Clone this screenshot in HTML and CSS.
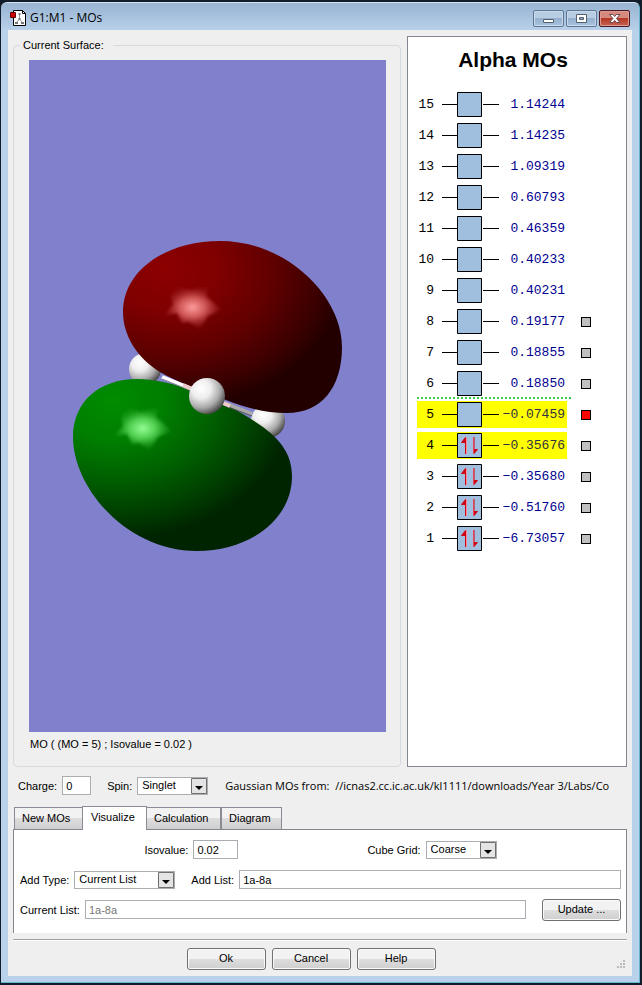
FILE: index.html
```html
<!DOCTYPE html>
<html lang="en">
<head>
<meta charset="utf-8">
<title>G1:M1 - MOs</title>
<link rel="stylesheet" href="styles.css">
</head>
<body>
<div class="window">
  <header class="titlebar">
    <svg class="app-icon" viewBox="0 0 16 16" aria-hidden="true">
      <path d="M3.500 .5H12.500L15.500 3.500V15.500H3.500Z" fill="#fff" stroke="#000"/>
      <path d="M12.500 .5V3.500H15.500" fill="none" stroke="#000"/>
      <path d="M9.500 5V9L6.500 12.500M9.500 9L12.500 12.500" fill="none" stroke="#999"/>
      <path d="M8.500 3h2v2h-2zM8.500 8h2v2h-2zM5 12h3v2H5zM11 12h3v2h-3z" fill="#777"/>
      <path d="M.5 2.500h5v5h-5z" fill="#c00" stroke="#600"/>
    </svg>
    <h1 class="caption">G1:M1 - MOs</h1>
    <div class="window-buttons">
      <button class="winbtn" type="button" aria-label="Minimize"><svg viewBox="0 0 29 15"><path d="M9.500 8.500h10v3h-10z" fill="#fff" stroke="#53616f"/></svg></button>
      <button class="winbtn" type="button" aria-label="Maximize"><svg viewBox="0 0 29 15"><path d="M9.500 3.500h10v8h-10z" fill="#fff" stroke="#53616f"/><path d="M12.500 6.500h4v2h-4z" fill="#8fa8c4" stroke="#53616f"/></svg></button>
      <button class="winbtn close" type="button" aria-label="Close"><svg viewBox="0 0 29 15"><path d="M9.500 3.500h3.500l1.700 2 1.700-2h3.500l-3.400 4 3.400 4h-3.500l-1.700-2-1.700 2h-3.500l3.400-4z" fill="#fff" stroke="#6b4a50"/></svg></button>
    </div>
  </header>

  <main class="client">
    <div class="upper">
      <fieldset class="surface">
        <legend>Current Surface:</legend>
        <svg class="scene" viewBox="0 0 357 672" role="img" aria-label="Molecular orbital surface">
          <defs>
            <radialGradient id="red" gradientUnits="userSpaceOnUse" cx="0" cy="0" r="1" gradientTransform="translate(135 208) rotate(4) scale(182 138)">
              <stop offset="0" stop-color="#8c0000"/><stop offset=".3" stop-color="#800000"/><stop offset=".6" stop-color="#600000"/><stop offset=".85" stop-color="#3c0000"/><stop offset="1" stop-color="#220000"/>
            </radialGradient>
            <radialGradient id="green" gradientUnits="userSpaceOnUse" cx="0" cy="0" r="1" gradientTransform="translate(82 340) rotate(4) scale(180 138)">
              <stop offset="0" stop-color="#008c00"/><stop offset=".3" stop-color="#007e00"/><stop offset=".6" stop-color="#005c00"/><stop offset=".85" stop-color="#003a00"/><stop offset="1" stop-color="#002400"/>
            </radialGradient>
            <radialGradient id="atom" cx=".34" cy=".3" r=".75">
              <stop offset="0" stop-color="#fff"/><stop offset=".35" stop-color="#eee"/><stop offset=".7" stop-color="#aaa"/><stop offset="1" stop-color="#444"/>
            </radialGradient>
            <radialGradient id="redShine"><stop offset="0" stop-color="#ffa0a0"/><stop offset=".45" stop-color="#df6666" stop-opacity=".85"/><stop offset="1" stop-color="#a02020" stop-opacity=".15"/></radialGradient>
            <radialGradient id="greenShine"><stop offset="0" stop-color="#98ff98"/><stop offset=".45" stop-color="#60df60" stop-opacity=".85"/><stop offset="1" stop-color="#20a020" stop-opacity=".15"/></radialGradient>
            <filter id="soft" x="-20%" y="-20%" width="140%" height="140%"><feGaussianBlur stdDeviation="1.500"/></filter>
          </defs>
          <rect width="357" height="672" fill="#8080cc"/>
          <circle cx="116" cy="309" r="16" fill="url(#atom)"/>
          <circle cx="239" cy="361" r="17" fill="url(#atom)"/>
          <path fill="url(#red)" d="M94 252C94 211 136 181 191 181C258 181 313 236 313 287C313 328 292 353 258 353C235 353 215 347 197 340C175 332 148 322 131 312C108 298 94 275 94 252Z"/>
          <path fill="url(#green)" d="M44 377C44 342 70 319 108 319C145 319 195 340 231 365C253 380 263 396 263 416C263 460 220 491 168 491C98 491 44 428 44 377Z"/>
          <path d="M133 317L163 329" stroke="#fff" stroke-width="4"/>
          <path d="M133 319L163 331" stroke="#89839b"/>
          <path d="M195 343L223 354" stroke="#aaa" stroke-width="4"/>
          <path d="M194 345L223 356" stroke="#555"/>
          <path d="M154 325L163 329M194 343L201 346" stroke="#eecaca" stroke-width="4"/>
          <circle cx="178" cy="336" r="18" fill="url(#atom)"/>
          <path fill="url(#redShine)" filter="url(#soft)" d="M149 226L161 230L180 226L177 236L193 250L179 256L171 269L160 262L153 263L148 253L134 256L144 245L142 235Z"/>
          <path fill="url(#greenShine)" filter="url(#soft)" d="M99 347L112 352L130 347L127 357L143 371L129 377L121 390L110 383L103 384L98 374L84 377L94 366L92 356Z"/>
        </svg>
        <p class="status">MO ( (MO = 5) ; Isovalue = 0.02 )</p>
      </fieldset>

      <section class="orbitals">
        <h2>Alpha MOs</h2>
        <svg class="symbols" aria-hidden="true">
          <symbol id="empty" viewBox="0 0 58 27"><path d="M0 13.500H15M41 13.500H57" stroke="#000"/><path d="M15.500 1.500h24v24h-24z" fill="#a0bfdf" stroke="#000"/></symbol>
          <symbol id="pair" viewBox="0 0 58 27"><use href="#empty"/><path d="M24.500 22V5M31.500 5V22" stroke="#ff8a98" stroke-width="1"/><path d="M23.500 22V5.500L19.500 10.500H23.500M32 5V21.500L35.500 17.500H32" stroke="#d00014" fill="#d00014"/></symbol>
        </svg>
        <table class="mo-list">
          <tbody>
            <tr><td>15</td><td><svg><use href="#empty"/></svg></td><td>1.14244</td><td></td></tr>
            <tr><td>14</td><td><svg><use href="#empty"/></svg></td><td>1.14235</td><td></td></tr>
            <tr><td>13</td><td><svg><use href="#empty"/></svg></td><td>1.09319</td><td></td></tr>
            <tr><td>12</td><td><svg><use href="#empty"/></svg></td><td>0.60793</td><td></td></tr>
            <tr><td>11</td><td><svg><use href="#empty"/></svg></td><td>0.46359</td><td></td></tr>
            <tr><td>10</td><td><svg><use href="#empty"/></svg></td><td>0.40233</td><td></td></tr>
            <tr><td>9</td><td><svg><use href="#empty"/></svg></td><td>0.40231</td><td></td></tr>
            <tr><td>8</td><td><svg><use href="#empty"/></svg></td><td>0.19177</td><td><input type="checkbox" aria-label="Show MO 8"></td></tr>
            <tr><td>7</td><td><svg><use href="#empty"/></svg></td><td>0.18855</td><td><input type="checkbox" aria-label="Show MO 7"></td></tr>
            <tr><td>6</td><td><svg><use href="#empty"/></svg></td><td>0.18850</td><td><input type="checkbox" aria-label="Show MO 6"></td></tr>
            <tr class="selected divider"><td>5</td><td><svg><use href="#empty"/></svg></td><td>−0.07459</td><td><input type="checkbox" aria-label="Show MO 5" checked></td></tr>
            <tr class="selected"><td>4</td><td><svg><use href="#pair"/></svg></td><td>−0.35676</td><td><input type="checkbox" aria-label="Show MO 4"></td></tr>
            <tr><td>3</td><td><svg><use href="#pair"/></svg></td><td>−0.35680</td><td><input type="checkbox" aria-label="Show MO 3"></td></tr>
            <tr><td>2</td><td><svg><use href="#pair"/></svg></td><td>−0.51760</td><td><input type="checkbox" aria-label="Show MO 2"></td></tr>
            <tr><td>1</td><td><svg><use href="#pair"/></svg></td><td>−6.73057</td><td><input type="checkbox" aria-label="Show MO 1"></td></tr>
          </tbody>
        </table>
      </section>
    </div>

    <div class="molecule">
      <label for="charge">Charge:</label>
      <input class="field charge" id="charge" type="text" value="0">
      <label for="spin">Spin:</label>
      <select class="drop spin" id="spin"><option>Singlet</option></select>
      <p class="source">Gaussian MOs from: &nbsp;//icnas2.cc.ic.ac.uk/kl1111/downloads/Year 3/Labs/Co</p>
    </div>

    <div class="tabs" role="tablist">
      <button class="tab first" type="button" role="tab">New MOs</button>
      <button class="tab active" type="button" role="tab" aria-selected="true">Visualize</button>
      <button class="tab wide" type="button" role="tab">Calculation</button>
      <button class="tab" type="button" role="tab">Diagram</button>
    </div>
    <section class="panel" role="tabpanel">
      <div class="row spread">
        <div class="pair"><label for="iso">Isovalue:</label><input class="field iso" id="iso" type="text" value="0.02"></div>
        <div class="pair"><label for="grid">Cube Grid:</label><select class="drop grid" id="grid"><option>Coarse</option></select></div>
      </div>
      <div class="row">
        <label for="type">Add Type:</label>
        <select class="drop type" id="type"><option>Current List</option></select>
        <label class="add-label" for="add">Add List:</label>
        <input class="field grow" id="add" type="text" value="1a-8a">
      </div>
      <div class="row">
        <label for="current">Current List:</label>
        <input class="field grow" id="current" type="text" value="1a-8a" disabled>
        <button class="push update" type="button">Update ...</button>
      </div>
    </section>

    <footer class="actions">
      <button class="push" type="button">Ok</button>
      <button class="push" type="button">Cancel</button>
      <button class="push" type="button">Help</button>
      <svg class="grip" viewBox="0 0 8 8" aria-hidden="true"><path d="M6 0h2v2H6zM3 3h2v2H3zM6 3h2v2H6zM0 6h2v2H0zM3 6h2v2H3zM6 6h2v2H6z" fill="#bbb"/></svg>
    </footer>
  </main>
</div>
</body>
</html>
```
FILE: styles.css
```css
* { box-sizing: border-box; }

body {
  margin: 0;
  min-height: 100vh;
  display: flex;
  padding: 2px 2px 2px 1px;
  background: #101c2a;
  color: #000;
  font: 11px/14px "Liberation Sans", Arial, sans-serif;
}

h1, h2, p { margin: 0; }
button, input, select { font: inherit; color: inherit; margin: 0; }

.window {
  flex: 1;
  min-width: 0;
  display: flex;
  flex-direction: column;
  padding: 0 7px 6px;
  border: 1px solid #65b5cc;
  border-top-color: #d5e3f0;
  border-left: 0;
  border-radius: 6px 6px 0 0;
  background: linear-gradient(#98b4d2, #b9d1ea 28px);
}

.titlebar {
  height: 27px;
  display: flex;
  align-items: center;
  gap: 4px;
  padding: 3px 2px 0;
}
.app-icon { width: 16px; height: 16px; }
.caption { flex: 1; font: 12px/16px "Open Sans", "Noto Sans", sans-serif; }
.window-buttons { display: flex; gap: 2px; }
.winbtn {
  width: 31px;
  height: 17px;
  padding: 0;
  border: 1px solid #5d7693;
  border-radius: 2px;
  box-shadow: inset 0 0 0 1px #c8daeb;
  background: linear-gradient(#b9cde2 50%, #94b0ce 50%, #a9c4df);
}
.winbtn svg { display: block; width: 29px; height: 15px; }
.winbtn.close {
  border-color: #4b1824;
  box-shadow: inset 0 0 0 1px #dc9c94;
  background: linear-gradient(#d5897f 50%, #b53826 50%, #c66451);
}

.client {
  flex: 1;
  display: flex;
  flex-direction: column;
  padding: 6px 5px 0;
  background: #efefef;
}

.upper { display: flex; gap: 6px; }

.surface {
  flex: 1;
  min-width: 0;
  margin: 2px 0 0;
  padding: 8px 14px 10px 15px;
  border: 1px solid #d5dadf;
  border-radius: 4px;
}
.surface legend { margin-left: -9px; padding: 0 9px 0 3px; }
.scene { display: block; width: 100%; }
.status { padding: 5px 1px; }

.orbitals {
  width: 220px;
  border: 1px solid #828790;
  background: #fff;
}
.orbitals h2 {
  padding: 11px 0 15px;
  margin-right: 8px;
  text-align: center;
  font: bold 21px/24px "Liberation Sans", Arial, sans-serif;
}
.symbols { position: absolute; width: 0; height: 0; }

.mo-list {
  margin-left: 9px;
  border-spacing: 0 4px;
  font: 13px/16px "Liberation Mono", monospace;
}
.mo-list td { height: 27px; padding: 0; text-align: right; }
.mo-list td:nth-child(1) { width: 25px; padding-right: 8px; position: relative; }
.mo-list td:nth-child(3) { width: 67px; padding-right: 2px; color: #000090; }
.mo-list td:nth-child(4) { width: 24px; }
.mo-list svg { display: block; width: 58px; height: 27px; }
.mo-list input {
  display: block;
  width: 10px;
  height: 10px;
  margin-left: 14px;
  appearance: none;
  border: 1px solid #000;
  background: #c0c0c0;
}
.mo-list input:checked { background: #f00; }
.selected td:not(:last-child) { background: #ff0; }
.selected td:nth-child(3) { color: #303040; }
.divider td:first-child::before {
  content: "";
  position: absolute;
  left: 0;
  top: -4px;
  width: 154px;
  height: 2px;
  background: repeating-linear-gradient(90deg, #3bc94a 0 2px, #fff 2px 4px);
}

.field {
  min-width: 0;
  height: 19px;
  padding: 0 3px;
  border: 1px solid #abadb3;
  background: #fff;
}
.field:disabled { color: #777; }
.drop {
  height: 18px;
  padding: 0 20px 2px 4px;
  appearance: none;
  border: 1px solid #abadb3;
  border-radius: 0;
  background:
    url("data:image/svg+xml,%3Csvg xmlns='http://www.w3.org/2000/svg' width='16' height='16'%3E%3Cpath d='M.5 .5h15v15H.5z' fill='%23e4e4e4' stroke='%23707070'/%3E%3Cpath d='M4 8h8l-4 4z'/%3E%3C/svg%3E") right top no-repeat,
    #fff;
}

.molecule {
  display: flex;
  align-items: center;
  height: 19px;
  margin-top: 9px;
  padding: 0 6px 0 5px;
}
.charge { width: 29px; margin: 0 16px 0 5px; }
.spin { width: 71px; margin: 0 17px 0 5px; }
.source {
  flex: 1;
  overflow: hidden;
  white-space: nowrap;
  font: 11px/16px "Open Sans", "Noto Sans", sans-serif;
}

.tabs {
  display: flex;
  align-items: flex-end;
  height: 24px;
  margin-top: 10px;
  padding-left: 1px;
}
.tab {
  min-width: 61px;
  height: 22px;
  padding: 0 7px 2px;
  border: 1px solid #898c95;
  border-bottom: 0;
  background: linear-gradient(#f2f2f2 45%, #ddd 50%, #cfcfcf);
  text-align: left;
}
.tab.first { width: 69px; }
.tab.active {
  width: 65px;
  height: 24px;
  margin: 0 -1px -1px;
  padding-bottom: 3px;
  padding-left: 8px;
  background: #fff;
  position: relative;
}
.tab.wide { width: 75px; }

.panel {
  display: flex;
  flex-direction: column;
  gap: 11px;
  padding: 10px 5px 14px 6px;
  border: 1px solid #828790;
  border-bottom: 0;
  background: #fff;
}
.row { display: flex; align-items: center; gap: 5px; height: 19px; }
.spread { justify-content: center; gap: 129px; }
.pair { display: flex; align-items: center; gap: 5px; }
.iso { width: 45px; }
.grid { width: 71px; }
.type { width: 101px; }
.add-label { margin-left: 11px; }
.grow { flex: 1; }
.update { margin-left: 11px; }

.push {
  width: 79px;
  height: 22px;
  padding: 0 0 2px;
  border: 1px solid #707070;
  border-radius: 3px;
  box-shadow: inset 0 0 0 1px #fafafa;
  background: linear-gradient(#f2f2f2 48%, #ddd 52%, #cfcfcf);
}

.actions {
  position: relative;
  display: flex;
  justify-content: center;
  gap: 6px;
  margin-top: 6px;
  padding: 8px 18px 6px 0;
  border-top: 1px solid #a0a0a0;
  box-shadow: inset 0 1px #fff;
}
.grip { position: absolute; right: 2px; bottom: 8px; width: 8px; height: 8px; }
```
